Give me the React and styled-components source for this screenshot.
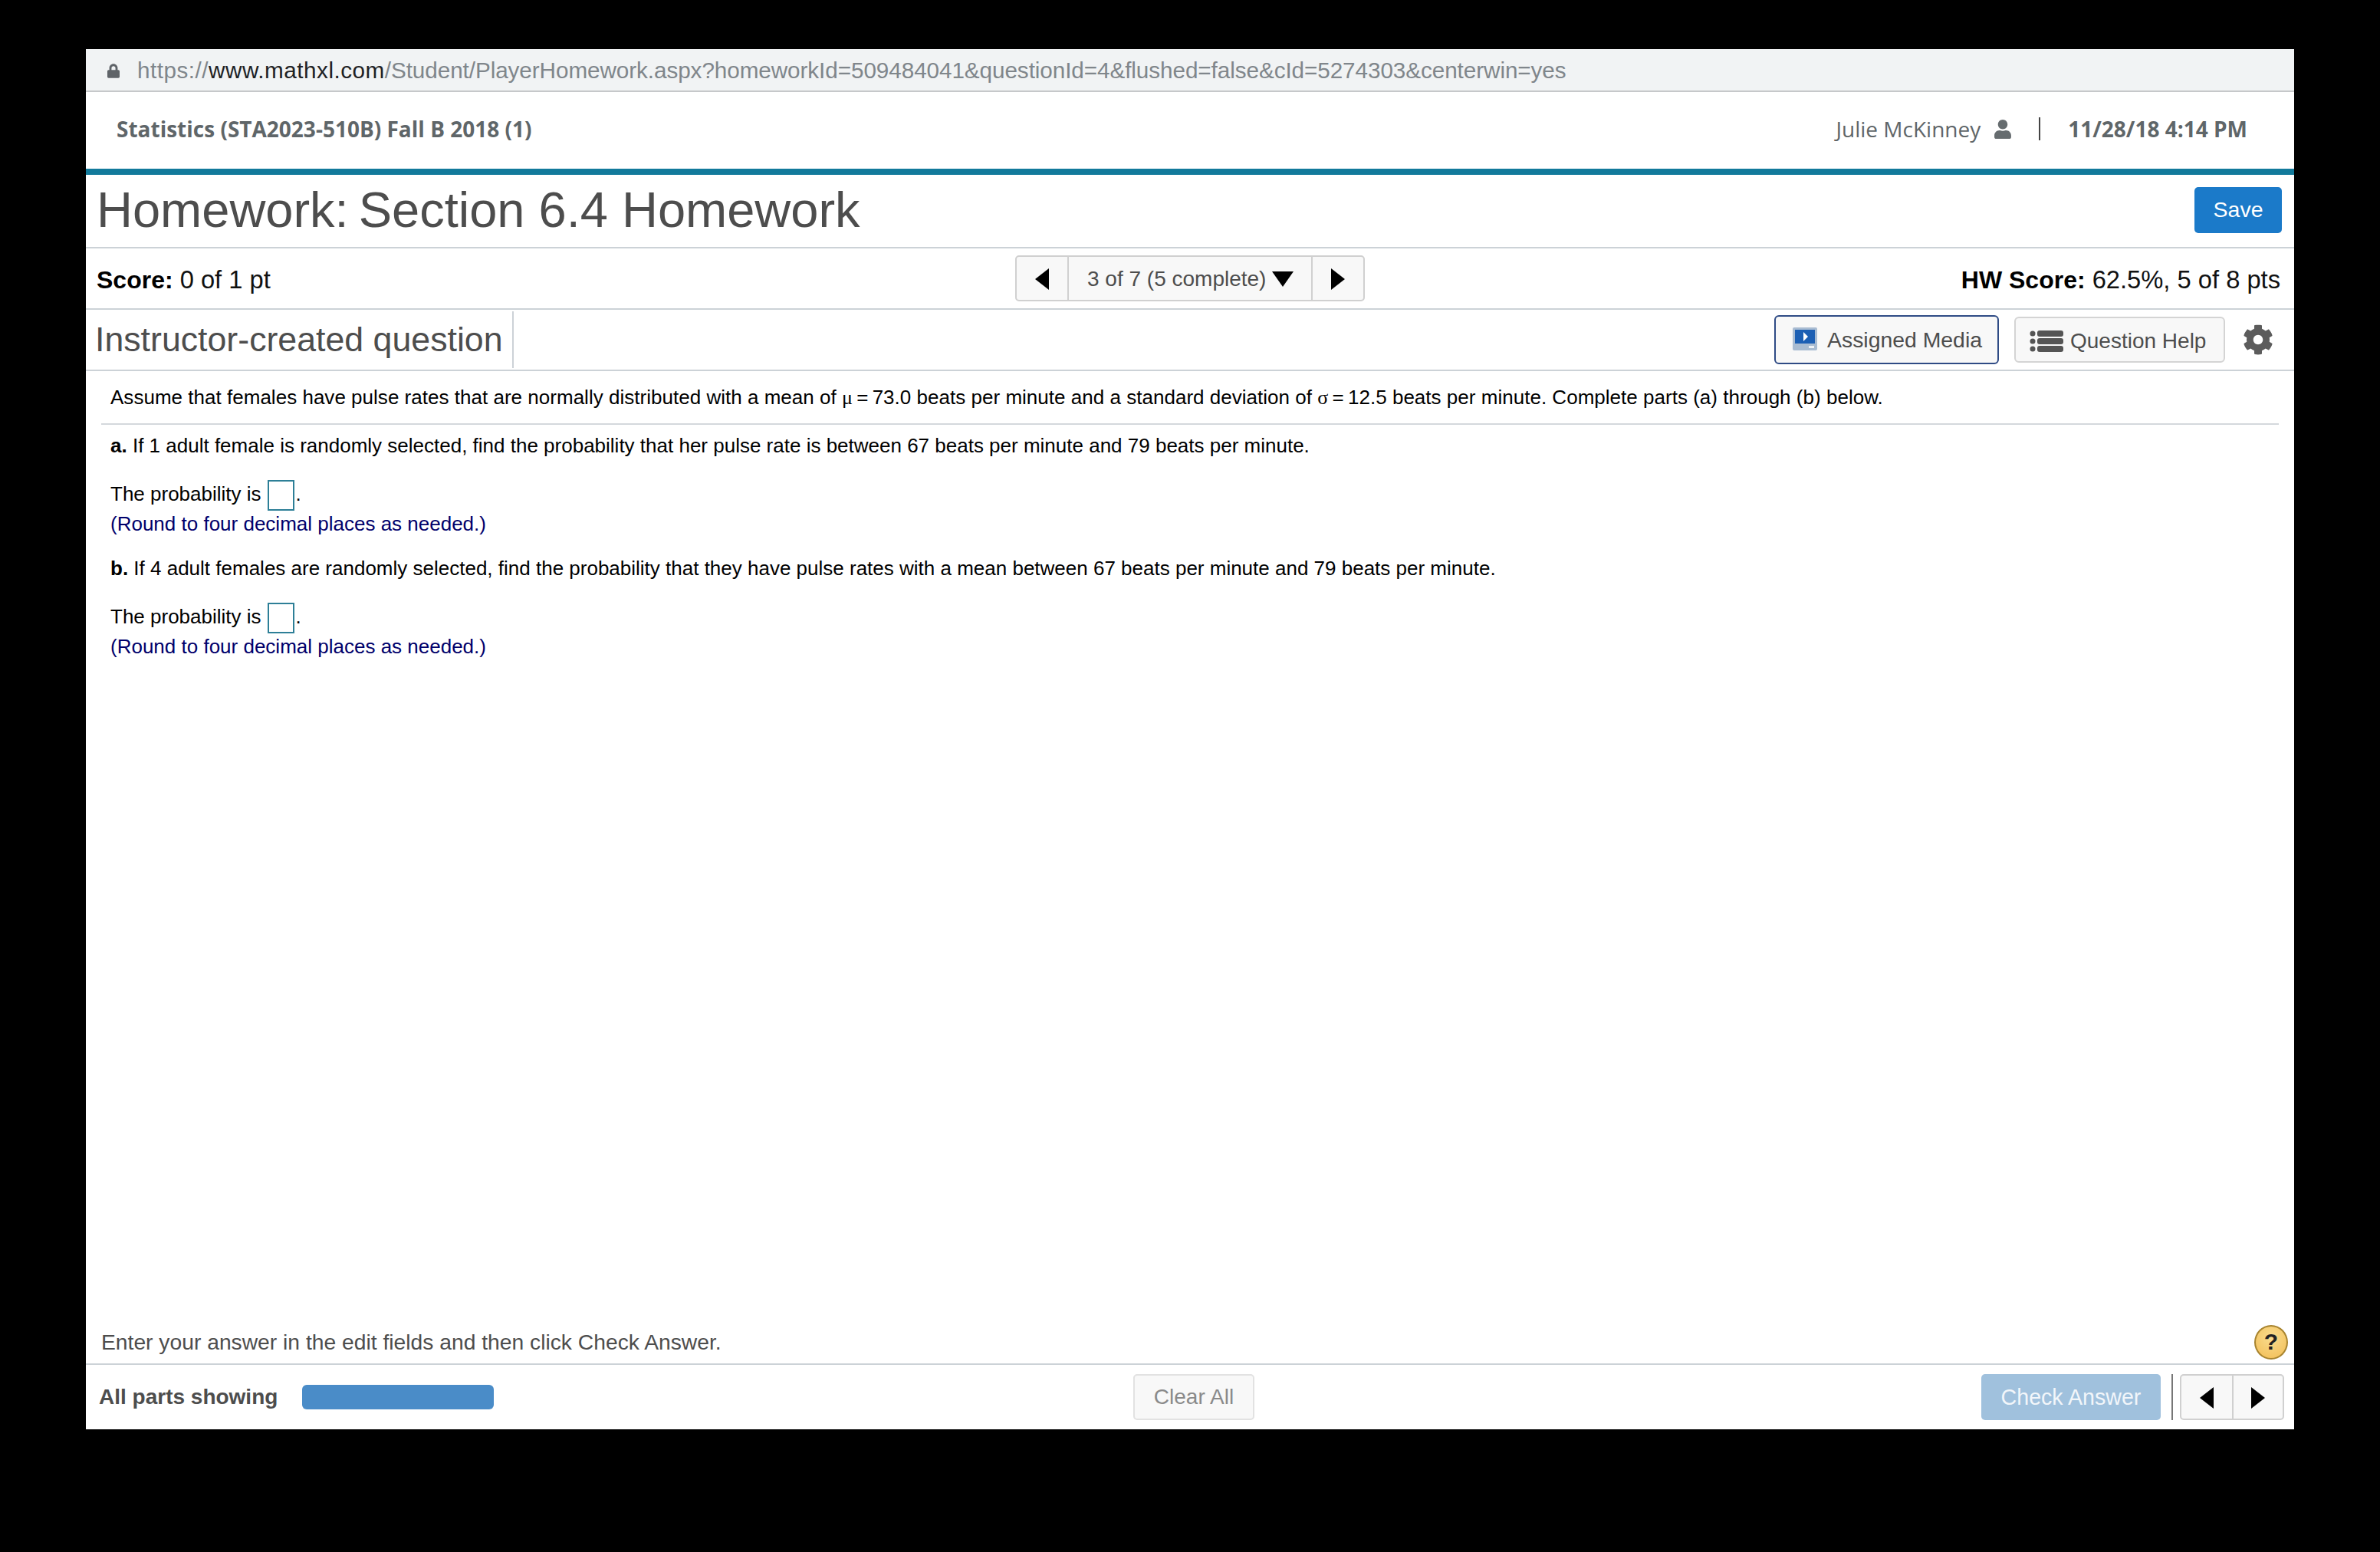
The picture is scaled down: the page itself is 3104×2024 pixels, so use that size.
import styled, { createGlobalStyle } from 'styled-components';
import { FaCog, FaUser, FaLock } from 'react-icons/fa';

const GlobalStyle = createGlobalStyle`
  html, body { margin: 0; padding: 0; background: #000; }
  * { box-sizing: border-box; }
`

const Page = styled.div`
  width: 3104px;
  height: 2024px;
  padding: 64px 112px 160px;
  background: #000;
  font-family: "Liberation Sans", Arial, sans-serif;
`
const Browser = styled.div`
  height: 100%;
  background: #fff;
  display: flex;
  flex-direction: column;
`
const UrlBar = styled.div`
  height: 56px;
  flex: none;
  display: flex;
  align-items: center;
  gap: 23px;
  padding: 2px 0 0 28px;
  background: #f1f3f4;
  border-bottom: 2px solid #c6c8ca;
  font-size: 29.7px;
  letter-spacing: -0.08px;
  color: #80868b;
  svg { width: 16px; height: 21px; color: #5f6368; }
  b { font-weight: 400; color: #202124; letter-spacing: 0.5px; }
  i { font-style: normal; letter-spacing: 0.5px; }
`
const CourseBar = styled.div`
  height: 108px;
  flex: none;
  display: flex;
  align-items: center;
  justify-content: space-between;
  padding: 0 61px 4px 40px;
  border-bottom: 8px solid #127a9b;
  font-family: "Open Sans", sans-serif;
  font-size: 28px;
  color: #5f6669;
`
const CourseName = styled.div`
  font-weight: 700;
`
const UserInfo = styled.div`
  display: flex;
  align-items: center;
  svg { width: 24px; height: 25px; margin-left: 17px; color: #666c6f; }
`
const Pipe = styled.span`
  width: 2px;
  height: 30px;
  background: #444;
  margin: 0 36px 0 35px;
`
const TimeStamp = styled.span`
  font-weight: 700;
`
const TitleRow = styled.div`
  height: 96px;
  flex: none;
  display: flex;
  align-items: center;
  justify-content: space-between;
  padding: 0 16px 3px 14px;
  border-bottom: 2px solid #ccd2d7;
`
const Title = styled.h1`
  margin: 0;
  font-size: 65px;
  font-weight: 400;
  color: #4d4d4d;
`
const SaveButton = styled.button`
  width: 114px;
  height: 60px;
  border: 0;
  border-radius: 5px;
  background: #1b7ac9;
  color: #fff;
  font: 400 28.5px "Liberation Sans", sans-serif;
`
const ScoreRow = styled.div`
  height: 80px;
  flex: none;
  display: grid;
  grid-template-columns: 1fr auto 1fr;
  align-items: center;
  padding: 0 14px;
  border-bottom: 2px solid #ccd2d7;
  font-size: 32.7px;
  color: #111;
  b { color: #000; font-size: 32px; }
`
const ScoreLeft = styled.div`
  padding-top: 3px;
`
const ScoreRight = styled.div`
  text-align: right;
  padding: 3px 4px 0 0;
`
const ButtonGroup = styled.div`
  height: ${p => p.$height}px;
  display: flex;
  background: #f8f8f8;
  border: 2px solid #d0d0d0;
  border-radius: 5px;
`
const GroupCell = styled.div`
  width: ${p => p.$width}px;
  display: flex;
  align-items: center;
  justify-content: center;
  padding-top: 2px;
  & + & { border-left: 2px solid #d0d0d0; }
`
const PagerLabel = styled.div`
  width: 320px;
  display: flex;
  align-items: center;
  gap: 8px;
  padding: 2px 0 0 24px;
  font-size: 28px;
  color: #4d4d4d;
  border-left: 2px solid #d0d0d0;
  border-right: 2px solid #d0d0d0;
`
const Triangle = styled.span`
  width: 0;
  height: 0;
  ${p => p.$dir === 'left' && 'border-top: 14px solid transparent; border-bottom: 14px solid transparent; border-right: 18px solid #000;'}
  ${p => p.$dir === 'right' && 'border-top: 14px solid transparent; border-bottom: 14px solid transparent; border-left: 18px solid #000;'}
  ${p => p.$dir === 'down' && 'border-left: 14px solid transparent; border-right: 14px solid transparent; border-top: 20px solid #000;'}
`
const QuestionRow = styled.div`
  height: 80px;
  flex: none;
  display: flex;
  align-items: center;
  justify-content: space-between;
  padding: 0 27px 0 12px;
  border-bottom: 2px solid #ccd2d7;
`
const QuestionType = styled.div`
  height: 74px;
  display: flex;
  align-items: center;
  padding-right: 12px;
  border-right: 2px solid #ccd2d7;
  font-size: 44.7px;
  color: #4d4d4d;
`
const Tools = styled.div`
  display: flex;
  align-items: center;
  > svg { width: 40px; height: 40px; margin-left: 23px; color: #5c5c5c; }
`
const ToolButton = styled.button`
  height: ${p => (p.$active ? 64 : 60)}px;
  width: ${p => p.$width}px;
  display: flex;
  align-items: center;
  gap: ${p => p.$gap}px;
  padding: ${p => (p.$active ? 0 : 3)}px 0 0 ${p => p.$pad}px;
  margin-right: ${p => (p.$active ? 20 : 0)}px;
  background: #f8f8f8;
  border: 2px solid ${p => (p.$active ? '#2f4b85' : '#d4d4d4')};
  border-radius: 6px;
  font: 400 ${p => p.$size}px "Liberation Sans", sans-serif;
  color: #4d4d4d;
`
const Content = styled.div`
  flex: 1;
  padding: 0 20px;
`
const Intro = styled.div`
  height: 70px;
  display: flex;
  align-items: center;
  padding-left: 12px;
  border-bottom: 2px solid #d4d8dc;
  font-size: 26px;
  letter-spacing: 0.02px;
  color: #000;
`
const Part = styled.div`
  padding-left: 12px;
  font-size: 26px;
  color: #000;
`
const PartText = styled.div`
  line-height: 30px;
  margin-top: ${p => p.$top}px;
`
const AnswerLine = styled.div`
  height: 40px;
  margin-top: 30px;
  padding-bottom: 4px;
  display: flex;
  align-items: center;
`
const AnswerBox = styled.span`
  width: 35px;
  height: 40px;
  flex: none;
  align-self: flex-start;
  margin: 0 2px 0 8px;
  border: 2px solid #2d7f97;
`
const RoundNote = styled.div`
  line-height: 30px;
  margin-top: 2px;
  color: #00006b;
`
const Greek = styled.span`
  font-family: "Liberation Serif", serif;
`
const HintRow = styled.div`
  height: 62px;
  flex: none;
  display: flex;
  align-items: center;
  justify-content: space-between;
  padding: 4px 8px 0 20px;
  border-bottom: 2px solid #ccd2d7;
  font-size: 28.25px;
  color: #4d4d4d;
`
const HelpBadge = styled.div`
  width: 44px;
  height: 45px;
  display: flex;
  align-items: center;
  justify-content: center;
  border-radius: 50%;
  border: 2px solid #a8842f;
  background: radial-gradient(circle at 50% 35%, #f9dc8e, #f2bd55);
  font-size: 30px;
  font-weight: 700;
  color: #222;
`
const BottomBar = styled.div`
  height: 84px;
  flex: none;
  display: grid;
  grid-template-columns: 1fr auto 1fr;
  align-items: center;
  padding: 0 13px 0 17px;
`
const Progress = styled.div`
  display: flex;
  align-items: center;
  gap: 32px;
  font-size: 28px;
  font-weight: 700;
  color: #4d4d4d;
`
const ProgressBar = styled.div`
  width: 250px;
  height: 32px;
  border-radius: 6px;
  background: #4a8cc8;
`
const ClearButton = styled.button`
  width: 158px;
  height: 60px;
  margin-left: 6px;
  background: #f8f8f8;
  border: 2px solid #e2e2e2;
  border-radius: 5px;
  font: 400 28px "Liberation Sans", sans-serif;
  color: #8a8a8a;
`
const BottomActions = styled.div`
  display: flex;
  align-items: center;
  justify-content: flex-end;
`
const CheckButton = styled.button`
  width: 234px;
  height: 60px;
  border: 0;
  border-radius: 5px;
  background: #a0c1dd;
  color: #f2f6fa;
  font: 400 28.6px "Liberation Sans", sans-serif;
`
const ActionDivider = styled.span`
  width: 2px;
  height: 60px;
  margin: 0 9px 0 14px;
  background: #777;
`

const MediaIcon = () => (
  <svg width="32" height="30" viewBox="0 0 32 30" style={{ marginTop: -2 }}>
    <rect width="32" height="30" rx="2" fill="#a9bcd2" />
    <rect x="3" y="3" width="26" height="18" fill="#1c5fb4" />
    <path d="M14 6l6 6-6 6z" fill="#fff" />
    <rect x="21" y="24" width="7" height="3" fill="#eef2f6" />
  </svg>
)

const ListIcon = () => (
  <svg width="44" height="28" viewBox="0 0 44 28" fill="#555">
    <circle cx="4" cy="4" r="3.5" />
    <circle cx="4" cy="14" r="3.5" />
    <circle cx="4" cy="24" r="3.5" />
    <rect x="10" y="0" width="34" height="8" rx="3" />
    <rect x="10" y="10" width="34" height="8" rx="3" />
    <rect x="10" y="20" width="34" height="8" rx="3" />
  </svg>
)

const Question = ({ label, text, top }) => (
  <Part>
    <PartText $top={top}><b>{label}</b> {text}</PartText>
    <AnswerLine>The probability is<AnswerBox />.</AnswerLine>
    <RoundNote>(Round to four decimal places as needed.)</RoundNote>
  </Part>
)

const App = () => {
  return (
    <Page>
      <GlobalStyle />
      <Browser>
        <UrlBar>
          <FaLock />
          <span><i>https://</i><b>www.mathxl.com</b>/Student/PlayerHomework.aspx?homeworkId=509484041&amp;questionId=4&amp;flushed=false&amp;cId=5274303&amp;centerwin=yes</span>
        </UrlBar>
        <CourseBar>
          <CourseName>Statistics (STA2023-510B) Fall B 2018 (1)</CourseName>
          <UserInfo>
            Julie McKinney
            <FaUser />
            <Pipe />
            <TimeStamp>11/28/18 4:14 PM</TimeStamp>
          </UserInfo>
        </CourseBar>
        <TitleRow>
          <Title>Homework:{'\u2009'}Section 6.4 Homework</Title>
          <SaveButton>Save</SaveButton>
        </TitleRow>
        <ScoreRow>
          <ScoreLeft><b>Score:</b> 0 of 1 pt</ScoreLeft>
          <ButtonGroup $height={60}>
            <GroupCell $width={66}><Triangle $dir="left" /></GroupCell>
            <PagerLabel>3 of 7 (5 complete)<Triangle $dir="down" /></PagerLabel>
            <GroupCell $width={66}><Triangle $dir="right" /></GroupCell>
          </ButtonGroup>
          <ScoreRight><b>HW Score:</b> 62.5%, 5 of 8 pts</ScoreRight>
        </ScoreRow>
        <QuestionRow>
          <QuestionType>Instructor-created question</QuestionType>
          <Tools>
            <ToolButton $active $width={293} $pad={22} $gap={13} $size={28.4}><MediaIcon />Assigned Media</ToolButton>
            <ToolButton $width={275} $pad={18} $gap={9} $size={28}><ListIcon />Question Help</ToolButton>
            <FaCog />
          </Tools>
        </QuestionRow>
        <Content>
          <Intro>
            <span>Assume that females have pulse rates that are normally distributed with a mean of <Greek>μ</Greek>{'\u2009=\u2009'}73.0 beats per minute and a standard deviation of <Greek>σ</Greek>{'\u2009=\u2009'}12.5 beats per minute. Complete parts (a) through (b) below.</span>
          </Intro>
          <Question top={12} label="a." text="If 1 adult female is randomly selected, find the probability that her pulse rate is between 67 beats per minute and 79 beats per minute." />
          <Question top={28} label="b." text="If 4 adult females are randomly selected, find the probability that they have pulse rates with a mean between 67 beats per minute and 79 beats per minute." />
        </Content>
        <HintRow>
          Enter your answer in the edit fields and then click Check Answer.
          <HelpBadge>?</HelpBadge>
        </HintRow>
        <BottomBar>
          <Progress>All parts showing<ProgressBar /></Progress>
          <ClearButton>Clear All</ClearButton>
          <BottomActions>
            <CheckButton>Check Answer</CheckButton>
            <ActionDivider />
            <ButtonGroup $height={60}>
              <GroupCell $width={66}><Triangle $dir="left" /></GroupCell>
              <GroupCell $width={66}><Triangle $dir="right" /></GroupCell>
            </ButtonGroup>
          </BottomActions>
        </BottomBar>
      </Browser>
    </Page>
  )
}

export default App;
